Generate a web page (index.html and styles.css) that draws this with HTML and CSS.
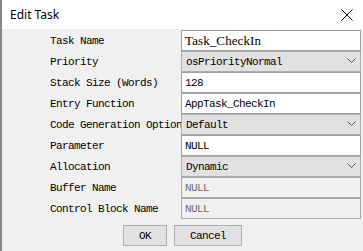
FILE: index.html
```html
<!DOCTYPE html>
<html>
<head>
<meta charset="utf-8">
<link rel="stylesheet" href="styles.css">
</head>
<body>
<div class="window">
  <div class="titlebar">
    <span class="title">Edit Task</span>
    <svg class="close" width="12" height="12" viewBox="0 0 12 12"><path d="M0.5 0.5 L11.5 11.5 M11.5 0.5 L0.5 11.5" stroke="#000" stroke-width="1" fill="none"/></svg>
  </div>
  <div class="body">
    <div class="form">
      <div class="label">Task Name</div>
      <div class="field input"><span class="serif">Task_CheckIn</span></div>
      <div class="label">Priority</div>
      <div class="field select"><span>osPriorityNormal</span><svg class="chev" width="9" height="5" viewBox="0 0 9 5"><polyline points="0.5,0.5 4.5,4.5 8.5,0.5" fill="none" stroke="#555"/></svg></div>
      <div class="label">Stack Size (Words)</div>
      <div class="field input"><span>128</span></div>
      <div class="label">Entry Function</div>
      <div class="field input"><span>AppTask_CheckIn</span></div>
      <div class="label">Code Generation Option</div>
      <div class="field select"><span>Default</span><svg class="chev" width="9" height="5" viewBox="0 0 9 5"><polyline points="0.5,0.5 4.5,4.5 8.5,0.5" fill="none" stroke="#555"/></svg></div>
      <div class="label">Parameter</div>
      <div class="field input"><span>NULL</span></div>
      <div class="label">Allocation</div>
      <div class="field select"><span>Dynamic</span><svg class="chev" width="9" height="5" viewBox="0 0 9 5"><polyline points="0.5,0.5 4.5,4.5 8.5,0.5" fill="none" stroke="#555"/></svg></div>
      <div class="label">Buffer Name</div>
      <div class="field input disabled"><span>NULL</span></div>
      <div class="label">Control Block Name</div>
      <div class="field input disabled"><span>NULL</span></div>
    </div>
    <div class="buttons">
      <div class="btn ok">OK</div>
      <div class="btn cancel">Cancel</div>
    </div>
  </div>
</div>
</body>
</html>
```
FILE: styles.css
```css
html, body {
  margin: 0;
  padding: 0;
  background: #f0f0f0;
}
.window {
  width: 361px;
  height: 251px;
  border-left: 2px solid #868686;
  background: #f0f0f0;
  display: flex;
  flex-direction: column;
  overflow: hidden;
}
.titlebar {
  height: 29px;
  background: #ffffff;
  display: flex;
  align-items: center;
  justify-content: space-between;
  padding: 0 10px 0 8px;
  flex: none;
}
.title {
  font-family: "Noto Sans", "Open Sans", sans-serif;
  font-size: 12px;
  color: #000;
}
.close {
  display: block;
  margin-top: 1px;
}
.body {
  flex: 1;
  padding-top: 1px;
}
.form {
  display: grid;
  grid-template-columns: 131px 180px;
  grid-auto-rows: 21px;
  padding-left: 48px;
}
.label, .field, .btn {
  font-family: "Liberation Mono", "DejaVu Sans Mono", monospace;
  font-size: 11px;
  font-weight: normal;
  letter-spacing: -0.6px;
  color: #000;
}
.label {
  display: flex;
  align-items: center;
  white-space: nowrap;
  overflow: hidden;
}
.field {
  box-sizing: border-box;
  height: 21px;
  display: flex;
  align-items: center;
  white-space: nowrap;
  overflow: hidden;
}
.input {
  background: #ffffff;
  border: 1px solid #a0a0a0;
  padding-left: 3px;
}
.input.disabled {
  background: #f0f0f0;
  border-color: #a9a9a9;
  color: #6d6d6d;
}
.select {
  background: #e1e1e1;
  border: 1px solid #adadad;
  padding-left: 4px;
  padding-right: 4px;
  justify-content: space-between;
}
.chev {
  display: block;
  margin-top: -3px;
}
.serif {
  font-family: "Liberation Serif", serif;
  font-size: 13px;
  letter-spacing: 0.1px;
}
.buttons {
  display: flex;
  gap: 7px;
  padding-left: 121px;
  margin-top: 6px;
}
.btn {
  box-sizing: border-box;
  height: 21px;
  background: #e1e1e1;
  border: 1px solid #adadad;
  display: flex;
  align-items: center;
  justify-content: center;
}
.ok { width: 44px; }
.cancel { width: 68px; }
```
